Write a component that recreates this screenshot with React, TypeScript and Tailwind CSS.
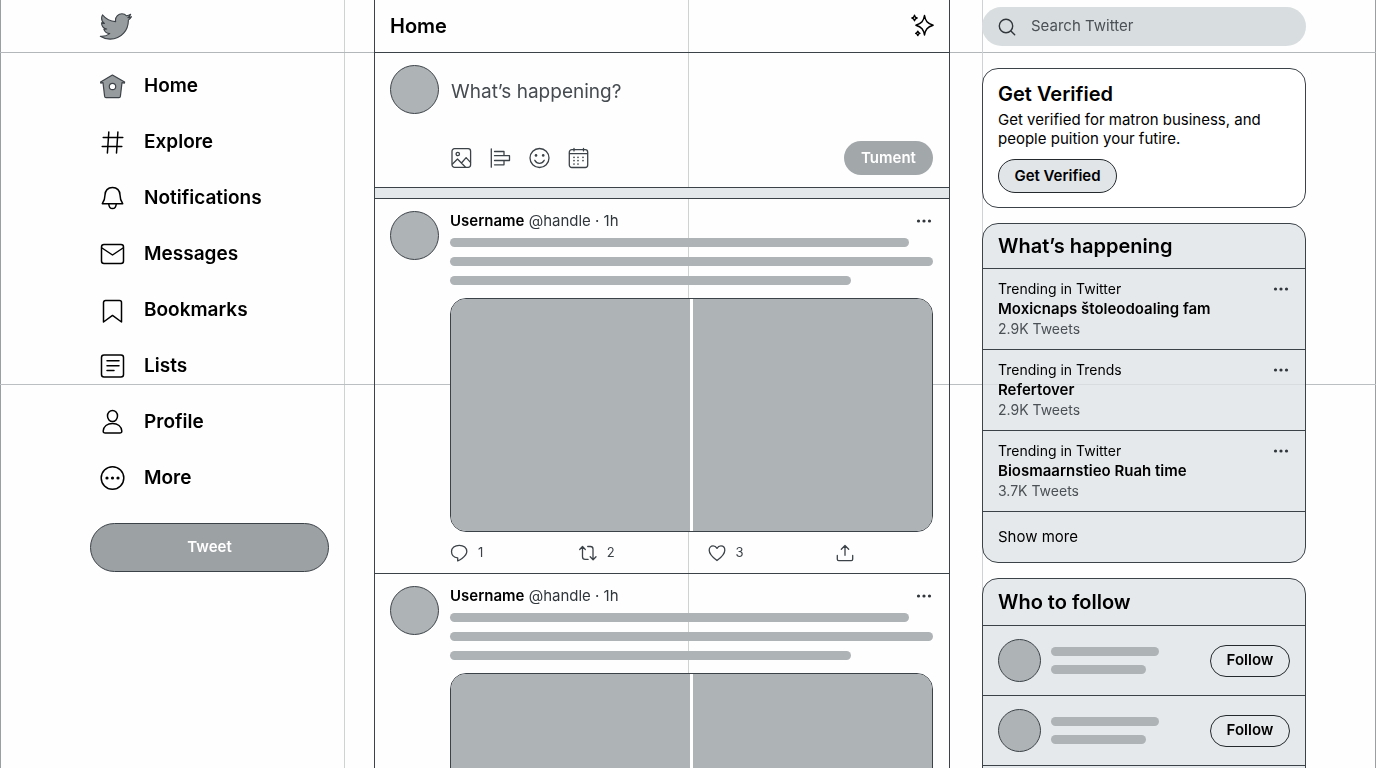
import type { ReactNode } from "react"

interface IconProps {
  children: ReactNode
  box?: number
  className: string
}

function Icon({ children, box = 24, className }: IconProps) {
  return (
    <svg
      viewBox={`0 0 ${box} ${box}`}
      className={`shrink-0 overflow-visible ${className}`}
      fill="none"
      stroke="currentColor"
      strokeLinecap="round"
      strokeLinejoin="round"
      aria-hidden="true"
    >
      {children}
    </svg>
  )
}

const navItems = [
  {
    label: "Home",
    icon: (
      <g stroke="#3c4247" strokeWidth="1.2">
        <path fill="#969b9e" d="M3 8.6 4.6 22.2c.1.9.6 1.4 1.4 1.4h13c.8 0 1.3-.5 1.4-1.4L22 8.6l2.4.5.2-1L12.4 1 .6 8.1l.2 1z" />
        <circle cx="12.5" cy="12.5" r="3.2" fill="#fff" />
      </g>
    ),
  },
  {
    label: "Explore",
    icon: <path d="M8.8 2 7.4 23M17.9 2l-1.4 21M3.2 7.6h19.6M2.2 16.5h19.6" />,
  },
  {
    label: "Notifications",
    icon: (
      <>
        <path d="M12.5 1.4C7.8 1.4 5 4.8 5 9c0 4.2-1 6.2-2.7 8.7h20.4C21 15.2 20 13.2 20 9c0-4.2-2.8-7.6-7.5-7.6z" />
        <path d="M8.7 17.7c.3 3.3 1.8 4.9 3.8 4.9s3.5-1.6 3.8-4.9" />
      </>
    ),
  },
  {
    label: "Messages",
    icon: (
      <>
        <rect x="1.5" y="2.5" width="22" height="19" rx="2.5" />
        <path d="m2 6 10.5 7L23 6" />
      </>
    ),
  },
  {
    label: "Bookmarks",
    icon: <path d="M3.5 24V4.6c0-1.2.8-2 2-2h14c1.2 0 2 .8 2 2V24l-9-6.6z" />,
  },
  {
    label: "Lists",
    icon: (
      <>
        <rect x="1.5" y="1" width="22" height="22" rx="2.5" />
        <path d="M7 6.7h12M7 11.7h12M7 16.5h7" />
      </>
    ),
  },
  {
    label: "Profile",
    icon: (
      <>
        <ellipse cx="12.5" cy="6" rx="5" ry="5.5" />
        <path d="M3.2 21c.4-4.4 4-7.5 9.3-7.5s8.9 3.1 9.3 7.5c.1 1.3-.7 2-2 2H5.2c-1.3 0-2.1-.7-2-2z" />
      </>
    ),
  },
  {
    label: "More",
    icon: (
      <>
        <circle cx="12.5" cy="12" r="11.3" />
        <g fill="currentColor" stroke="none">
          <circle cx="7" cy="12" r="1.6" />
          <circle cx="12.5" cy="12" r="1.6" />
          <circle cx="18" cy="12" r="1.6" />
        </g>
      </>
    ),
  },
]

const composerTools = [
  {
    label: "Add photo",
    icon: (
      <>
        <rect x="1" y=".7" width="18.6" height="18.6" rx="2.5" />
        <circle cx="6.8" cy="6" r="1.7" />
        <path d="m1.5 16 5-5 7.8 8M10.5 15l4.6-5.4 4.4 4.8" />
      </>
    ),
  },
  {
    label: "Add poll",
    icon: <path d="M1.3.8v18.4M4.5 3.5H14v4.2M4.5 7.7h15v4.8h-15M14 12.5v4.3H4.5" />,
  },
  {
    label: "Add emoji",
    icon: (
      <>
        <circle cx="10.5" cy="10" r="9.5" />
        <path d="M5.8 12.3c1.1 1.9 2.8 3 4.7 3s3.6-1.1 4.7-3" />
        <g fill="currentColor" stroke="none">
          <circle cx="7" cy="7.4" r="1.3" />
          <circle cx="14.2" cy="7.4" r="1.3" />
        </g>
      </>
    ),
  },
  {
    label: "Schedule",
    icon: (
      <>
        <rect x="1.3" y="1.7" width="18.4" height="17.8" rx="2.5" />
        <path d="M1.5 5.6h18M6 .3v2.6M15.5.3v2.6" />
        <path strokeWidth="1.7" d="M6 9.3h0M10 9.3h0M15 9.3h0M6 12.6h0M10 12.6h0M15 12.6h0M6 16h0M10 16h0" />
      </>
    ),
  },
]

const actions = [
  {
    label: "Reply",
    count: 1,
    icon: <path d="M9.3 1.3c4.5 0 7.5 2.7 7.5 6.2 0 2.9-2.3 5-4.8 6.9-1.5 1.1-2.7 1.9-4.3 2.5v-3C3.9 13.6 1.5 11 1.5 7.6c0-3.6 3.3-6.3 7.8-6.3z" />,
  },
  {
    label: "Retweet",
    count: 2,
    icon: <path d="m.7 5.5 2.8-3 2.8 3M3.5 2.7v10.1c0 1.7.9 2.6 2.6 2.6h3M8.7 2.5h2.6c1.7 0 2.7.9 2.7 2.6v10.5M11.2 12.8l2.9 3 2.9-3" />,
  },
  {
    label: "Like",
    count: 3,
    icon: <path d="M9 16.5C4.5 13.2 1.2 10 1.2 6.2c0-2.5 1.6-4.3 3.9-4.3 1.6 0 3 .9 3.9 2.5.9-1.6 2.3-2.5 3.9-2.5 2.3 0 3.9 1.8 3.9 4.3 0 3.8-3.3 7-7.8 10.3z" />,
  },
  {
    label: "Share",
    icon: <path d="M9 11.3V1.5M5.3 5.2 9 1.5l3.7 3.7M1.3 11.5v3.7c0 .9.5 1.4 1.4 1.4h12.6c.9 0 1.4-.5 1.4-1.4v-3.7" />,
  },
]

const trends = [
  { topic: "Trending in Twitter", title: "Moxicnaps štoleodoaling fam", count: "2.9K Tweets" },
  { topic: "Trending in Trends", title: "Refertover", count: "2.9K Tweets" },
  { topic: "Trending in Twitter", title: "Biosmaarnstieo Ruah time", count: "3.7K Tweets" },
]

function MoreButton() {
  return (
    <button type="button" aria-label="More options" className="flex h-5 items-center text-[#30363b]">
      <Icon box={16} className="h-4 w-4">
        <g fill="currentColor" stroke="none">
          <circle cx="1.5" cy="8" r="1.6" />
          <circle cx="7" cy="8" r="1.6" />
          <circle cx="12.5" cy="8" r="1.6" />
        </g>
      </Icon>
    </button>
  )
}

function Guides() {
  return (
    <div className="pointer-events-none fixed inset-0" aria-hidden="true">
      <div className="absolute inset-y-0 left-0 w-px bg-[#9a9fa2]" />
      <div className="absolute inset-y-0 right-0 w-px bg-[#9a9fa2]" />
      <div className="absolute inset-y-0 left-1/4 w-px bg-[#cfd2d3]" />
      <div className="absolute inset-y-0 left-1/2 w-px bg-[#cfd2d3]" />
      <div className="absolute inset-x-0 top-[52px] h-px bg-[#b4b7b9]" />
      <div className="absolute inset-x-0 top-1/2 h-px bg-[#bcbfc1]" />
    </div>
  )
}

function Post({ showActions = false }: { showActions?: boolean }) {
  return (
    <article className="flex gap-[11px] border-b border-[#3c4348] pt-3 pr-4 pl-[15px]">
      <div className="h-[49px] w-[49px] shrink-0 rounded-full border border-[#3c4348] bg-[#aeb3b6]" />
      <div className="min-w-0 flex-1">
        <div className="flex h-5 items-center justify-between">
          <p className="text-[15px] leading-5 text-[#30363b]">
            <span className="font-semibold text-black">Username</span> @handle · 1h
          </p>
          <MoreButton />
        </div>
        <div className="mt-[7px] space-y-[10px]">
          <div className="h-[9px] w-[95%] rounded-full bg-[#aeb3b6]" />
          <div className="h-[9px] w-full rounded-full bg-[#aeb3b6]" />
          <div className="h-[9px] w-[83%] rounded-full bg-[#aeb3b6]" />
        </div>
        <div className="mt-[13px] grid h-[234px] grid-cols-2 gap-[3px] overflow-hidden rounded-2xl border border-[#3c4348] bg-white">
          <div className="bg-[#aeb3b6]" />
          <div className="bg-[#aeb3b6]" />
        </div>
        {showActions && (
          <div className="grid h-[41px] grid-cols-[4fr_4fr_4fr_3fr] items-center text-[13px] text-[#3c4348]">
            {actions.map((action) => (
              <button key={action.label} type="button" aria-label={action.label} className="flex items-center gap-[10px]">
                <Icon box={18} className="h-[18px] w-[18px] stroke-[1.3]">
                  {action.icon}
                </Icon>
                {action.count}
              </button>
            ))}
          </div>
        )}
      </div>
    </article>
  )
}

function FollowRow() {
  return (
    <div className="flex h-[70px] items-center border-t border-[#3c4348] px-[15px]">
      <div className="h-[43px] w-[43px] shrink-0 rounded-full border border-[#3c4348] bg-[#aeb3b6]" />
      <div className="ml-[10px] flex-1 space-y-[9px]">
        <div className="h-[9px] w-[108px] rounded-full bg-[#aeb3b6]" />
        <div className="h-[9px] w-[95px] rounded-full bg-[#aeb3b6]" />
      </div>
      <button type="button" className="h-8 w-20 rounded-full border border-[#24292d] text-[15px] font-semibold">
        Follow
      </button>
    </div>
  )
}

export default function App() {
  return (
    <div className="h-screen overflow-hidden bg-[#fefefe] font-['Inter',sans-serif] text-black">
      <Guides />

      <div className="relative flex min-h-full pr-[70px] pl-[90px]">
        {/* Left navigation */}
        <header className="mr-[45px] w-[239px] shrink-0">
          <a href="#" aria-label="Twitter" className="flex h-[53px] items-center pl-[9px]">
            <Icon className="h-[33px] w-[33px]">
              <path
                fill="#979c9f"
                stroke="#3c4247"
                strokeWidth=".8"
                d="M23.643 4.937c-.835.37-1.732.62-2.675.733.962-.576 1.7-1.49 2.048-2.578-.9.534-1.897.922-2.958 1.13-.85-.904-2.06-1.47-3.4-1.47-2.572 0-4.658 2.086-4.658 4.66 0 .364.042.718.12 1.06-3.873-.195-7.304-2.05-9.602-4.868-.4.69-.63 1.49-.63 2.342 0 1.616.823 3.043 2.072 3.878-.764-.025-1.482-.234-2.11-.583v.06c0 2.257 1.605 4.14 3.737 4.568-.392.106-.803.162-1.227.162-.3 0-.593-.028-.877-.082.593 1.85 2.313 3.198 4.352 3.234-1.595 1.25-3.604 1.995-5.786 1.995-.376 0-.747-.022-1.112-.065 2.062 1.323 4.51 2.093 7.14 2.093 8.57 0 13.255-7.098 13.255-13.254 0-.2-.005-.402-.014-.602.91-.658 1.7-1.477 2.323-2.41z"
              />
            </Icon>
          </a>
          <nav className="pt-[5px]">
            {navItems.map((item) => (
              <a key={item.label} href="#" className="flex h-14 items-center gap-5 pl-[10px] text-[19px] font-semibold">
                <Icon className="h-6 w-6 stroke-[1.5]">{item.icon}</Icon>
                {item.label}
              </a>
            ))}
          </nav>
          <button
            type="button"
            className="mt-[17px] h-[49px] w-full rounded-full border border-[#3c4348] bg-[#9ca1a4] text-[15px] font-semibold text-white"
          >
            Tweet
          </button>
        </header>

        {/* Timeline */}
        <main className="min-w-0 flex-1 border-x border-[#3c4348]">
          <div className="flex h-[53px] items-center justify-between border-b border-[#3c4348] px-[15px]">
            <h1 className="text-xl font-semibold">Home</h1>
            <button type="button" aria-label="Top tweets">
              <Icon className="h-6 w-6 stroke-[1.5]">
                <path d="M14.5 1.500c.9 5.400 2.800 8 8.600 9.700-5.800 1.700-7.700 4.300-8.600 9.700-.9-5.400-2.800-8-8.600-9.700 5.800-1.700 7.700-4.300 8.600-9.700z" />
                <path d="M4.500 1.300c.4 1.700 1 2.300 2.600 2.700-1.600.4-2.200 1-2.600 2.700-.4-1.700-1-2.300-2.600-2.700 1.600-.4 2.200-1 2.600-2.700zM7.800 17.200c.3 1.300.8 1.800 2.100 2.200-1.300.4-1.800.9-2.100 2.200-.3-1.300-.8-1.800-2.100-2.200 1.300-.4 1.800-.9 2.100-2.200z" />
              </Icon>
            </button>
          </div>

          <form className="flex gap-3 pt-3 pr-4 pl-[15px]" onSubmit={(e) => e.preventDefault()}>
            <div className="h-[49px] w-[49px] shrink-0 rounded-full border border-[#3c4348] bg-[#aeb3b6]" />
            <div className="min-w-0 flex-1">
              <input
                type="text"
                aria-label="Tweet text"
                placeholder="What’s happening?"
                className="mt-2 block h-9 w-full bg-transparent text-[19px] outline-none placeholder:text-[#454b50]"
              />
              <div className="mt-8 mb-3 flex h-[34px] items-center justify-between">
                <div className="flex gap-[19px] text-[#3c4348]">
                  {composerTools.map((tool) => (
                    <button key={tool.label} type="button" aria-label={tool.label}>
                      <Icon box={20} className="h-5 w-5 stroke-[1.3]">
                        {tool.icon}
                      </Icon>
                    </button>
                  ))}
                </div>
                <button type="submit" className="h-[34px] w-[89px] rounded-full bg-[#a2a7aa] text-[15px] font-semibold text-white">
                  Tument
                </button>
              </div>
            </div>
          </form>
          <div className="h-3 border-y border-[#3c4348] bg-[#e4e8ea]" />

          <Post showActions />
          <Post />
        </main>

        {/* Right column */}
        <aside className="relative ml-8 w-[324px] shrink-0 pt-[7px]">
          <div className="absolute inset-y-0 left-0 w-px bg-[#cfd2d3]" aria-hidden="true" />
          <label className="relative flex h-[39px] items-center gap-[15px] rounded-full bg-[#d8dddf] px-4">
            <Icon box={18} className="h-[18px] w-[18px] stroke-[1.4] text-[#30363b]">
              <circle cx="8" cy="8" r="6.7" />
              <path d="m12.9 12.9 3.8 3.8" />
            </Icon>
            <input
              type="search"
              aria-label="Search Twitter"
              placeholder="Search Twitter"
              className="min-w-0 flex-1 bg-transparent text-[15px] outline-none placeholder:text-[#4a5055]"
            />
          </label>

          <section className="relative mt-[22px] rounded-2xl border border-[#3c4348] bg-white px-[15px] pt-3 pb-[14px]">
            <h2 className="text-xl leading-[26px] font-semibold">Get Verified</h2>
            <p className="mt-[3px] text-[15px] leading-[19px]">
              Get verified for matron business, and people puition your futire.
            </p>
            <button
              type="button"
              className="mt-[11px] h-[34px] w-[119px] rounded-full border border-[#24292d] bg-[#e1e5e7] text-[15px] font-semibold"
            >
              Get Verified
            </button>
          </section>

          <section className="relative mt-[15px] rounded-2xl border border-[#3c4348] bg-[#dfe4e6]/80">
            <h2 className="flex h-11 items-center px-[15px] text-xl font-semibold">What’s happening</h2>
            {trends.map((trend) => (
              <div key={trend.title} className="flex h-[81px] items-start justify-between border-t border-[#3c4348] px-[15px] pt-[10px]">
                <div>
                  <p className="text-sm leading-5">{trend.topic}</p>
                  <h3 className="text-[15px] leading-5 font-semibold">{trend.title}</h3>
                  <p className="text-sm leading-5 text-[#4a5055]">{trend.count}</p>
                </div>
                <MoreButton />
              </div>
            ))}
            <a href="#" className="flex h-[51px] items-center border-t border-[#3c4348] px-[15px] text-[15px]">
              Show more
            </a>
          </section>

          <section className="relative mt-[15px] rounded-2xl border border-[#3c4348] bg-[#dfe4e6]/80">
            <h2 className="flex h-[46px] items-center px-[15px] text-xl font-semibold">Who to follow</h2>
            <FollowRow />
            <FollowRow />
            <div className="h-[51px] border-t border-[#3c4348]" />
          </section>
        </aside>
      </div>
    </div>
  )
}
